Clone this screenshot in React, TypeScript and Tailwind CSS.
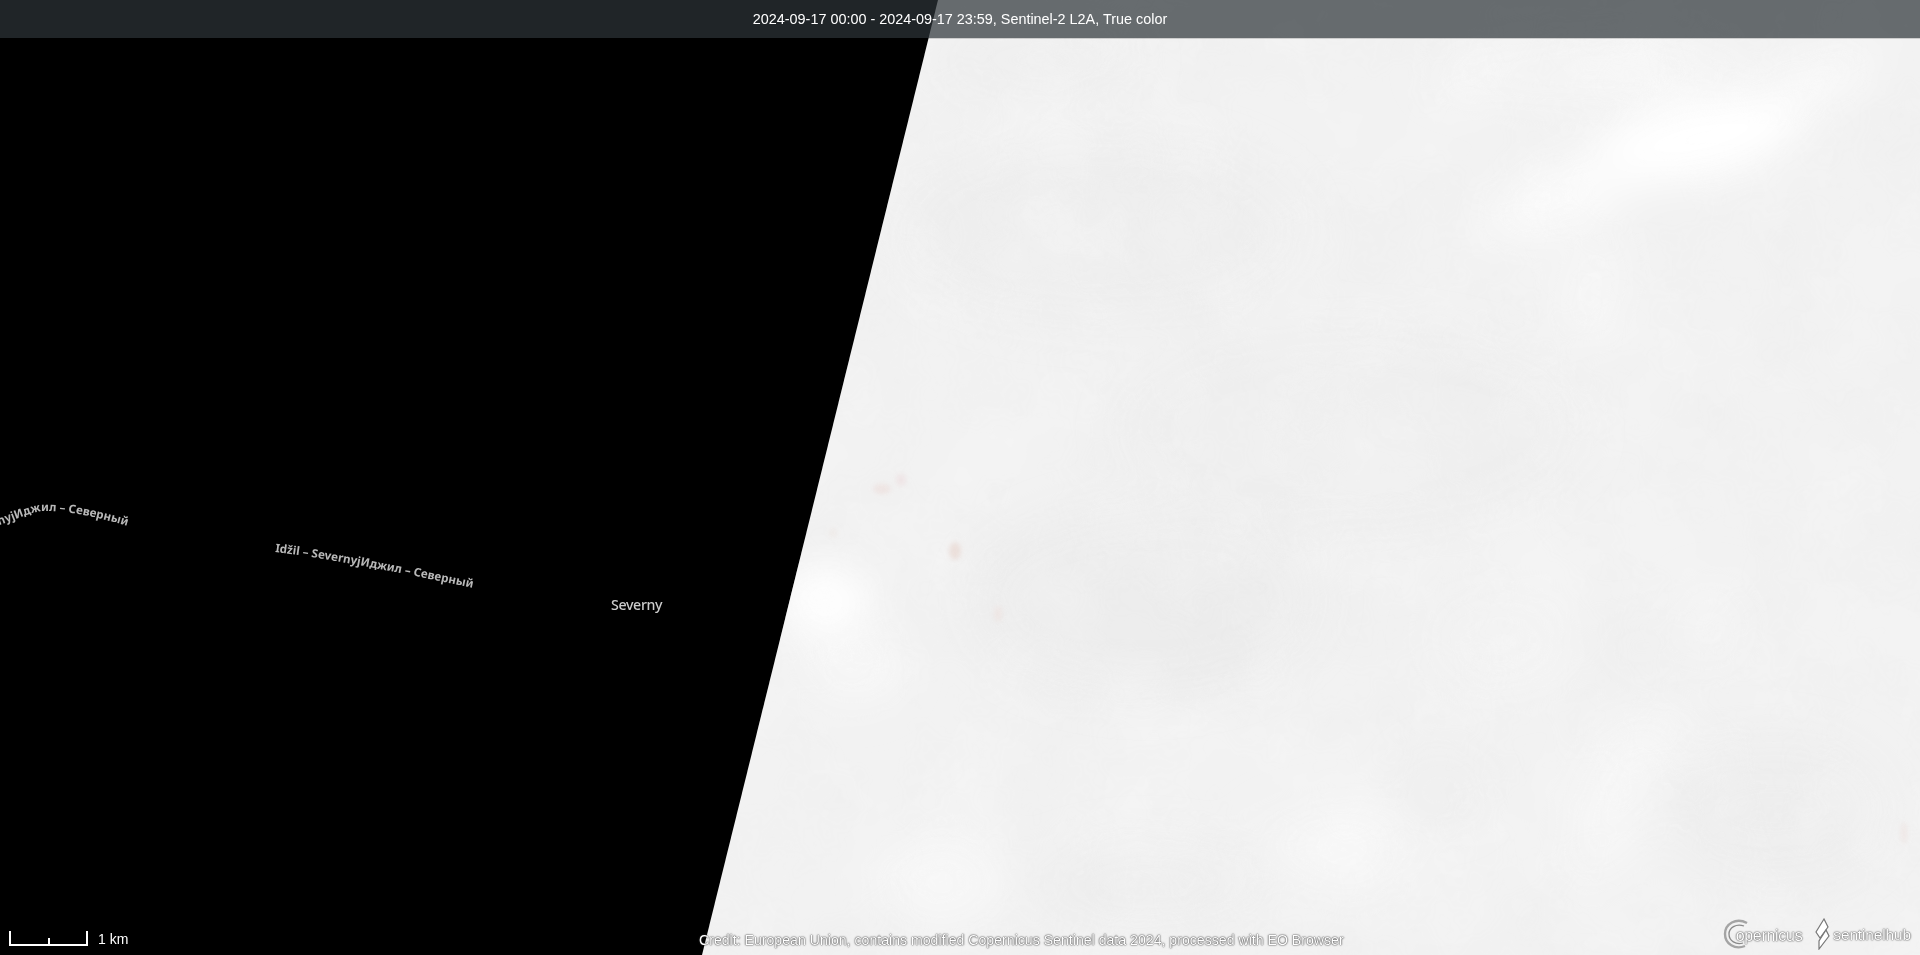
// cx, cy, rx, ry, fill, opacity, rotation
type Blob = [number, number, number, number, string, number, number?];

const clouds: Blob[] = [
  [1590, 70, 160, 30, "#f8f8f8", 0.7],
  [1570, 190, 70, 30, "#ffffff", 0.8, -20],
  [1535, 205, 50, 30, "#fbfbfb", 0.7, -30],
  [1590, 290, 30, 60, "#f9f9f9", 0.7, 20],
  [852, 665, 45, 35, "#fafafa", 0.8],
  [941, 883, 60, 45, "#f9f9f9", 0.7],
  [1325, 843, 70, 30, "#f8f8f8", 0.7],
  [1711, 627, 30, 40, "#f8f8f8", 0.7],
  [1620, 800, 40, 95, "#f8f8f8", 0.8, 25],
  [1351, 853, 50, 45, "#f9f9f9", 0.7],
  [1500, 640, 70, 50, "#f5f5f5", 0.5],
  [1146, 600, 170, 90, "#ebebeb", 0.8],
  [1146, 885, 110, 40, "#ececec", 0.7],
  [1100, 230, 200, 90, "#ededed", 0.6],
  [1350, 430, 230, 100, "#eeeeee", 0.5],
  [1040, 60, 100, 30, "#ececec", 0.6],
  [1774, 810, 110, 70, "#ececec", 0.7],
  [1636, 647, 30, 24, "#eeeeee", 0.5],
  [1440, 790, 40, 30, "#ededed", 0.6],
];

// the two patches that burn out to white need a harder edge
const highlights: Blob[] = [
  [1700, 138, 105, 40, "#ffffff", 1, -12],
  [1805, 88, 70, 20, "#fcfcfc", 0.8, -18],
  [825, 600, 46, 36, "#ffffff", 0.95],
];

const spots: Blob[] = [
  [882, 489, 9, 5, "#ecdcd9", 0.6],
  [901, 480, 5, 6, "#ecdcde", 0.6],
  [955, 551, 6, 9, "#e8d8d3", 0.75],
  [998, 614, 4, 8, "#eee2df", 0.7],
  [833, 533, 4, 5, "#ede5e2", 0.5],
  [1904, 833, 3, 11, "#eee2e0", 0.7],
];

function Blobs({ items }: { items: Blob[] }) {
  return (
    <>
      {items.map(([cx, cy, rx, ry, fill, opacity, rot], i) => (
        <ellipse
          key={i}
          cx={cx}
          cy={cy}
          rx={rx}
          ry={ry}
          fill={fill}
          opacity={opacity}
          transform={rot ? `rotate(${rot} ${cx} ${cy})` : undefined}
        />
      ))}
    </>
  );
}

function SatelliteLayer() {
  return (
    <svg className="absolute inset-0" width="1920" height="955" viewBox="0 0 1920 955">
      <defs>
        <clipPath id="swath">
          <polygon points="938,0 1920,0 1920,955 702,955" />
        </clipPath>
        <filter id="soft" x="-80%" y="-80%" width="260%" height="260%">
          <feGaussianBlur stdDeviation="24" />
        </filter>
        <filter id="hard" x="-60%" y="-100%" width="220%" height="300%">
          <feGaussianBlur stdDeviation="20" />
        </filter>
        <filter id="tiny" x="-60%" y="-60%" width="220%" height="220%">
          <feGaussianBlur stdDeviation="2.5" />
        </filter>
        <filter id="labelBlur">
          <feGaussianBlur stdDeviation="0.5" />
        </filter>
        <filter id="hazeLight" x="0" y="0" width="100%" height="100%">
          <feTurbulence type="fractalNoise" baseFrequency="0.01" numOctaves="4" seed="7" />
          <feColorMatrix values="0 0 0 0 1  0 0 0 0 1  0 0 0 0 1  0.4 0 0 0 -0.16" />
        </filter>
        <filter id="hazeDark" x="0" y="0" width="100%" height="100%">
          <feTurbulence type="fractalNoise" baseFrequency="0.012" numOctaves="4" seed="21" />
          <feColorMatrix values="0 0 0 0 0.6  0 0 0 0 0.6  0 0 0 0 0.6  0 0.08 0 0 -0.03" />
        </filter>
        <path id="road1" d="M-6 527 C 12 521, 30 512, 44 511 C 74 511, 104 519, 135 528" />
        <path id="road2" d="M275 552 C 340 560, 410 575, 478 589" />
      </defs>

      <g clipPath="url(#swath)">
        <rect width="1920" height="955" fill="#f2f2f2" />
        <g filter="url(#soft)">
          <Blobs items={clouds} />
        </g>
        <rect width="1920" height="955" filter="url(#hazeLight)" />
        <rect width="1920" height="955" filter="url(#hazeDark)" />
        <g filter="url(#hard)">
          <Blobs items={highlights} />
        </g>
        <g filter="url(#tiny)">
          <Blobs items={spots} />
        </g>
      </g>

      <g filter="url(#labelBlur)" fontFamily="'Noto Sans', 'Open Sans', sans-serif">
        <text fill="#b8b8b8" fontSize="11.65" fontWeight="700">
          <textPath href="#road1">rnyjИджил – Северный</textPath>
        </text>
        <text fill="#b8b8b8" fontSize="11.65" fontWeight="700">
          <textPath href="#road2">Idžil – SevernyjИджил – Северный</textPath>
        </text>
        <text x="611" y="610" fill="#cccccc" fontSize="14.2" fontWeight="500" letterSpacing="-0.35">
          Severny
        </text>
      </g>
    </svg>
  );
}

function ScaleBar() {
  return (
    <div className="flex items-end gap-[10px] pb-[4px] pl-[9px] text-white">
      <div className="flex h-[15px] w-[79px] items-end justify-center border-x-2 border-b-2 border-white">
        <div className="h-[6px] w-[2px] bg-white" />
      </div>
      <span className="translate-y-px text-sm leading-[16px]">1 km</span>
    </div>
  );
}

function Logos() {
  const glow = "[text-shadow:0_0_1px_#333,0_0_2px_#555]";
  return (
    <div className="flex items-center gap-[11px] pr-[9px] text-white">
      <div className="flex h-[32px] items-center">
        <svg width="28" height="32" viewBox="0 0 28 32" fill="none" className="-mr-[15px] shrink-0">
          <path d="M24 5 C 13 -1, 2 6, 2 16 C 2 26, 12 32, 22 28" stroke="#a4a4a4" strokeWidth="2.4" />
          <path d="M21 8 C 13 5, 6 10, 6 16 C 6 23, 13 27, 20 25" stroke="#8a8a8a" strokeWidth="1.3" />
        </svg>
        <span className={`pt-[3px] text-[16px] leading-none tracking-[-0.3px] ${glow}`}>opernicus</span>
      </div>
      <div className="flex h-[32px] items-center">
        <svg width="20" height="32" viewBox="0 0 20 32" fill="none" className="shrink-0">
          <path d="M11 1 L3 14 L7 20 L15 9 Z" fill="#ffffff" stroke="#777777" strokeWidth="1.2" />
          <path d="M13 12 L6 23 L6 31 L16 18 Z" fill="#ffffff" stroke="#777777" strokeWidth="1.2" />
        </svg>
        <span className={`pt-[1px] text-[15.4px] leading-none tracking-[-0.1px] ${glow}`}>sentinelhub</span>
      </div>
    </div>
  );
}

export default function App() {
  return (
    <div className="relative h-[955px] w-[1920px] overflow-hidden bg-black font-['Liberation_Sans',Arial,sans-serif]">
      <SatelliteLayer />

      <div className="relative flex h-full flex-col justify-between">
        <header className="flex h-[39px] items-center justify-center border-b border-black/15 bg-[rgba(45,52,57,0.71)] bg-clip-padding pt-px text-[14.4px] text-white">
          2024-09-17 00:00 - 2024-09-17 23:59, Sentinel-2 L2A, True color
        </header>

        <footer className="grid grid-cols-[699px_1fr_auto] items-end pb-[5px] text-white">
          <ScaleBar />
          <div className="pb-[2px] text-[14.13px] leading-[16px] [text-shadow:0_0_2px_#333,0_0_1px_#333]">
            Credit: European Union, contains modified Copernicus Sentinel data 2024, processed with EO Browser
          </div>
          <Logos />
        </footer>
      </div>
    </div>
  );
}
